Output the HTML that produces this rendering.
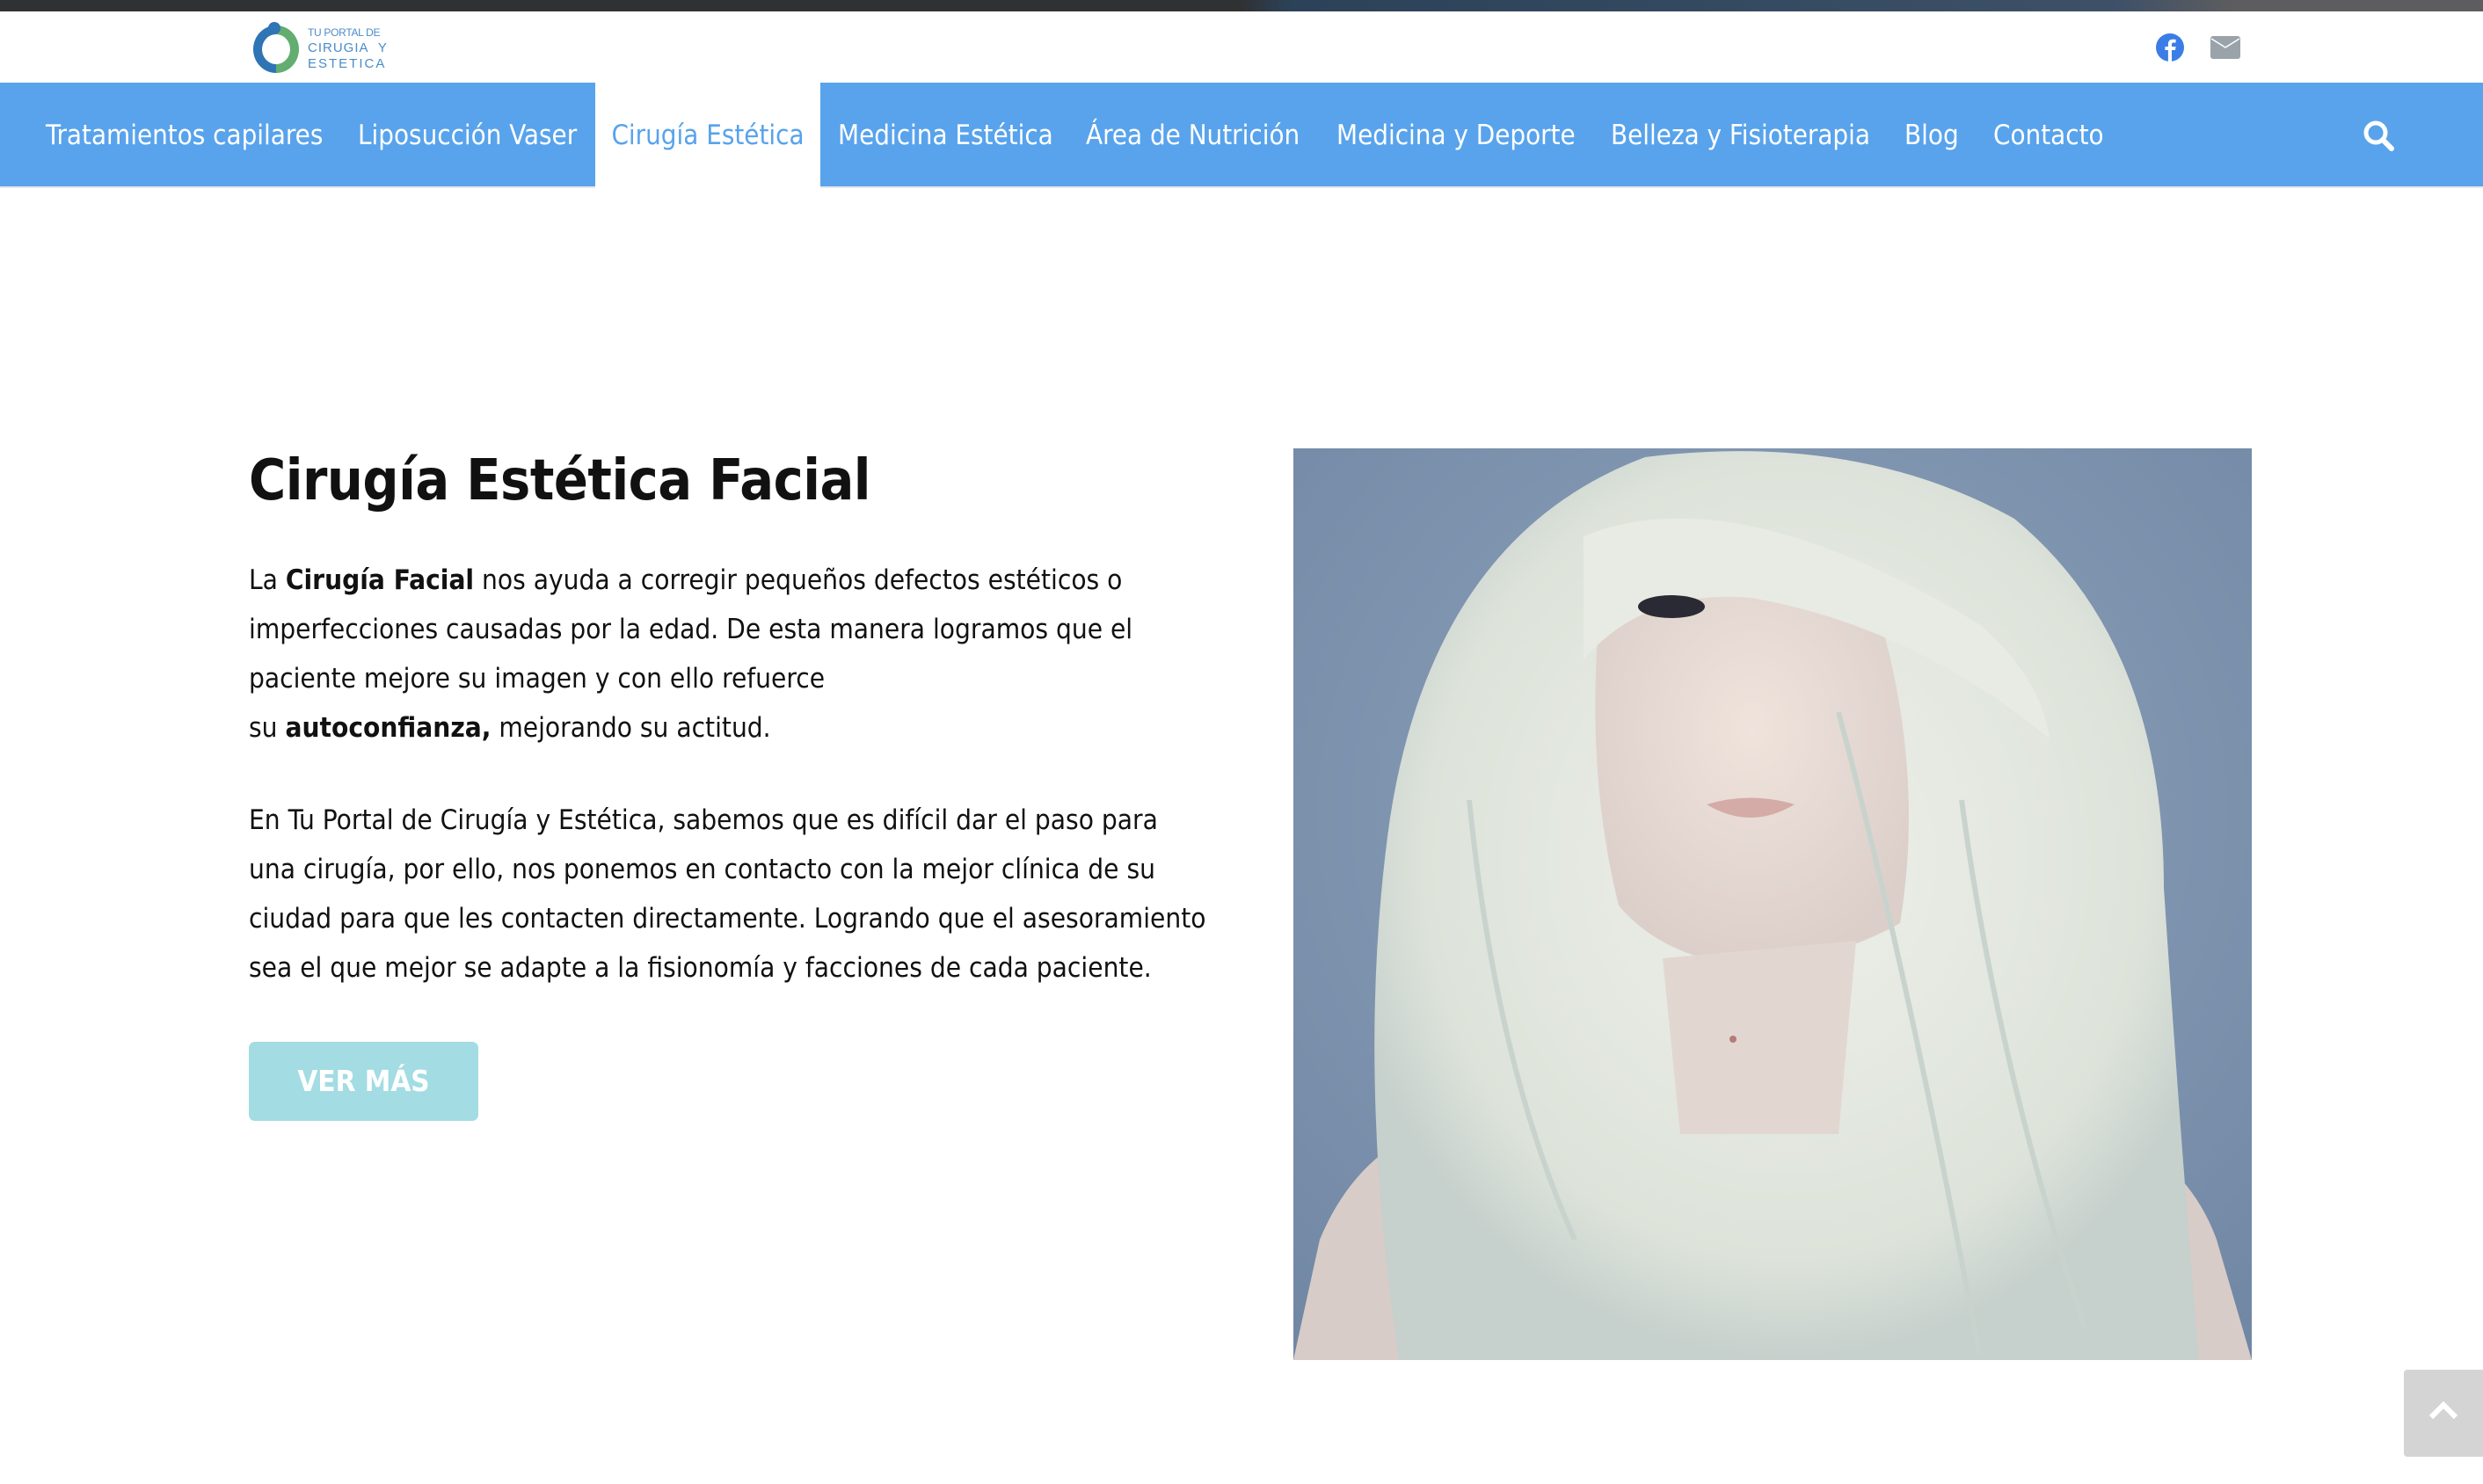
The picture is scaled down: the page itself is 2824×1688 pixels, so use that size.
<!DOCTYPE html>
<html><head><meta charset="utf-8">
<style>
*{margin:0;padding:0;box-sizing:border-box}
html,body{width:2824px;height:1688px;overflow:hidden;background:#fff;font-family:"DejaVu Sans Condensed","DejaVu Sans","Liberation Sans",sans-serif}
.top{position:absolute;left:0;top:0;width:2824px;height:13px;background:linear-gradient(90deg,#303133 0,#303133 50%,#2c4259 52%,#3d5068 85%,#5d5d5f 90%,#5d5d5f 100%)}
.head{position:absolute;left:0;top:13px;width:2824px;height:81px;background:#fff}
.nav{position:absolute;left:0;top:94px;width:2824px;height:120px;background:#58a3ec;border-bottom:2px solid #e8e9eb}
.nav span{position:absolute;top:0;height:120px;line-height:120px;color:#fff;font-size:31px;white-space:nowrap;font-family:"DejaVu Sans Condensed","DejaVu Sans",sans-serif}
.nav .act{background:#fff;color:#58a3ec;text-align:center}
h1{position:absolute;left:283px;top:510px;font-size:64px;font-weight:bold;color:#111;white-space:nowrap;letter-spacing:-0.5px}
.p{position:absolute;left:283px;font-size:31.3px;color:#111;white-space:nowrap;line-height:56px}
.btn{position:absolute;left:283px;top:1185px;width:261px;height:90px;background:#a3dce3;border-radius:7px;color:#fff;font-weight:bold;font-size:33px;text-align:center;line-height:90px}
.totop{position:absolute;left:2734px;top:1558px;width:90px;height:99px;background:#d4d4d4;border-radius:4px 0 0 4px}
</style></head><body>
<div class="top"></div>
<div class="head">
<svg style="position:absolute;left:282px;top:10px" width="64" height="66" viewBox="0 0 64 66">
<path d="M32 6 A26 27 0 0 0 32 60 L32 50 A16 17 0 0 1 32 16Z" fill="#2f74b5"/>
<path d="M32 6 A26 27 0 0 1 32 60 L32 50 A16 17 0 0 0 32 16Z" fill="#62ad6f"/>
<circle cx="30" cy="9" r="7" fill="#2f74b5"/>
</svg>
<div style="position:absolute;left:350px;top:15px;color:#4a8cc9;font-size:15px;line-height:18px;font-family:'Liberation Sans',sans-serif;letter-spacing:0.5px">
<div style="font-size:12px;letter-spacing:-0.3px">TU PORTAL DE</div><div style="letter-spacing:1px">CIRUGIA&nbsp;&nbsp;Y</div><div style="letter-spacing:2px">ESTETICA</div></div>
<svg style="position:absolute;left:2452px;top:25px" width="32" height="32" viewBox="0 0 32 32"><circle cx="16" cy="16" r="16" fill="#3b7de6"/><path d="M18 32V19h4l.6-4H18v-2.5c0-1.2.4-2 2-2h2.6V7c-.5-.1-2-.2-3.5-.2-3.3 0-5.2 2-5.2 5.4V15h-3.5v4h3.5v13Z" fill="#fff"/></svg>
<svg style="position:absolute;left:2514px;top:28px" width="34" height="26" viewBox="0 0 34 26"><rect width="34" height="26" rx="3" fill="#9aa3a9"/><path d="M1 3 L17 13 L33 3" stroke="#fff" stroke-width="1.5" fill="none"/></svg>
</div>
<div class="nav">
<span style="left:52px">Tratamientos capilares</span>
<span style="left:407px">Liposucción Vaser</span>
<span class="act" style="left:677px;width:256px">Cirugía Estética</span>
<span style="left:953px">Medicina Estética</span>
<span style="left:1235px">Área de Nutrición</span>
<span style="left:1520px">Medicina y Deporte</span>
<span style="left:1832px">Belleza y Fisioterapia</span>
<span style="left:2166px">Blog</span>
<span style="left:2267px">Contacto</span>
<svg style="position:absolute;left:2686px;top:41px" width="40" height="40" viewBox="0 0 40 40"><circle cx="16" cy="16" r="11" stroke="#fff" stroke-width="5" fill="none"/><path d="M24 24 L34 34" stroke="#fff" stroke-width="6" stroke-linecap="round"/></svg>
</div>
<h1>Cirugía Estética Facial</h1>
<div class="p" style="top:632px">La <b>Cirugía Facial</b> nos ayuda a corregir pequeños defectos estéticos o<br>imperfecciones causadas por la edad. De esta manera logramos que el<br>paciente mejore su imagen y con ello refuerce<br>su <b>autoconfianza,</b> mejorando su actitud.</div>
<div class="p" style="top:905px">En Tu Portal de Cirugía y Estética, sabemos que es difícil dar el paso para<br>una cirugía, por ello, nos ponemos en contacto con la mejor clínica de su<br>ciudad para que les contacten directamente. Logrando que el asesoramiento<br>sea el que mejor se adapte a la fisionomía y facciones de cada paciente.</div>
<div class="btn">VER MÁS</div>
<svg style="position:absolute;left:1471px;top:510px" width="1090" height="1037" viewBox="0 0 1090 1037">
<defs>
<radialGradient id="bg" cx="0.5" cy="0.4" r="0.8"><stop offset="0" stop-color="#8fa2bb"/><stop offset="1" stop-color="#6f86a3"/></radialGradient>
<radialGradient id="hair" cx="0.5" cy="0.45" r="0.55"><stop offset="0" stop-color="#eef0ea"/><stop offset="0.8" stop-color="#dde3da"/><stop offset="1" stop-color="#c6d0cc"/></radialGradient>
<radialGradient id="skin" cx="0.5" cy="0.4" r="0.6"><stop offset="0" stop-color="#efe3dc"/><stop offset="1" stop-color="#dccfca"/></radialGradient>
</defs>
<rect width="1090" height="1037" fill="url(#bg)"/>
<path d="M0 1037 L30 900 Q80 780 200 760 L880 760 Q1010 790 1050 900 L1090 1037Z" fill="#d8ccc8"/>
<path d="M120 1037 Q70 700 110 420 Q160 100 400 10 Q640 -20 820 80 Q990 220 990 500 Q1010 800 1030 1037Z" fill="url(#hair)"/>
<path d="M350 170 Q480 110 660 170 Q720 360 690 540 Q620 580 520 590 Q420 580 370 520 Q330 360 350 170Z" fill="url(#skin)"/>
<path d="M420 580 L440 780 L620 780 L640 560Z" fill="#e2d6d0"/>
<path d="M330 100 Q500 30 780 200 Q850 260 860 330 Q700 200 520 170 Q400 160 330 240Z" fill="#e7ebe4"/>
<ellipse cx="430" cy="180" rx="38" ry="13" fill="#2a2a34"/>
<path d="M470 405 Q520 390 570 405 Q520 435 470 405Z" fill="#d4aba6"/>
<circle cx="500" cy="672" r="4" fill="#b77a78"/>
<path d="M200 400 Q230 700 320 900 M760 400 Q800 700 900 1000 M620 300 Q700 600 780 1030" stroke="#c9d3cd" stroke-width="6" fill="none"/>
</svg>
<div class="totop"><svg style="position:absolute;left:28px;top:35px" width="34" height="22" viewBox="0 0 34 22"><path d="M3 19 L17 5 L31 19" stroke="#fff" stroke-width="6" fill="none"/></svg></div>
</body></html>
